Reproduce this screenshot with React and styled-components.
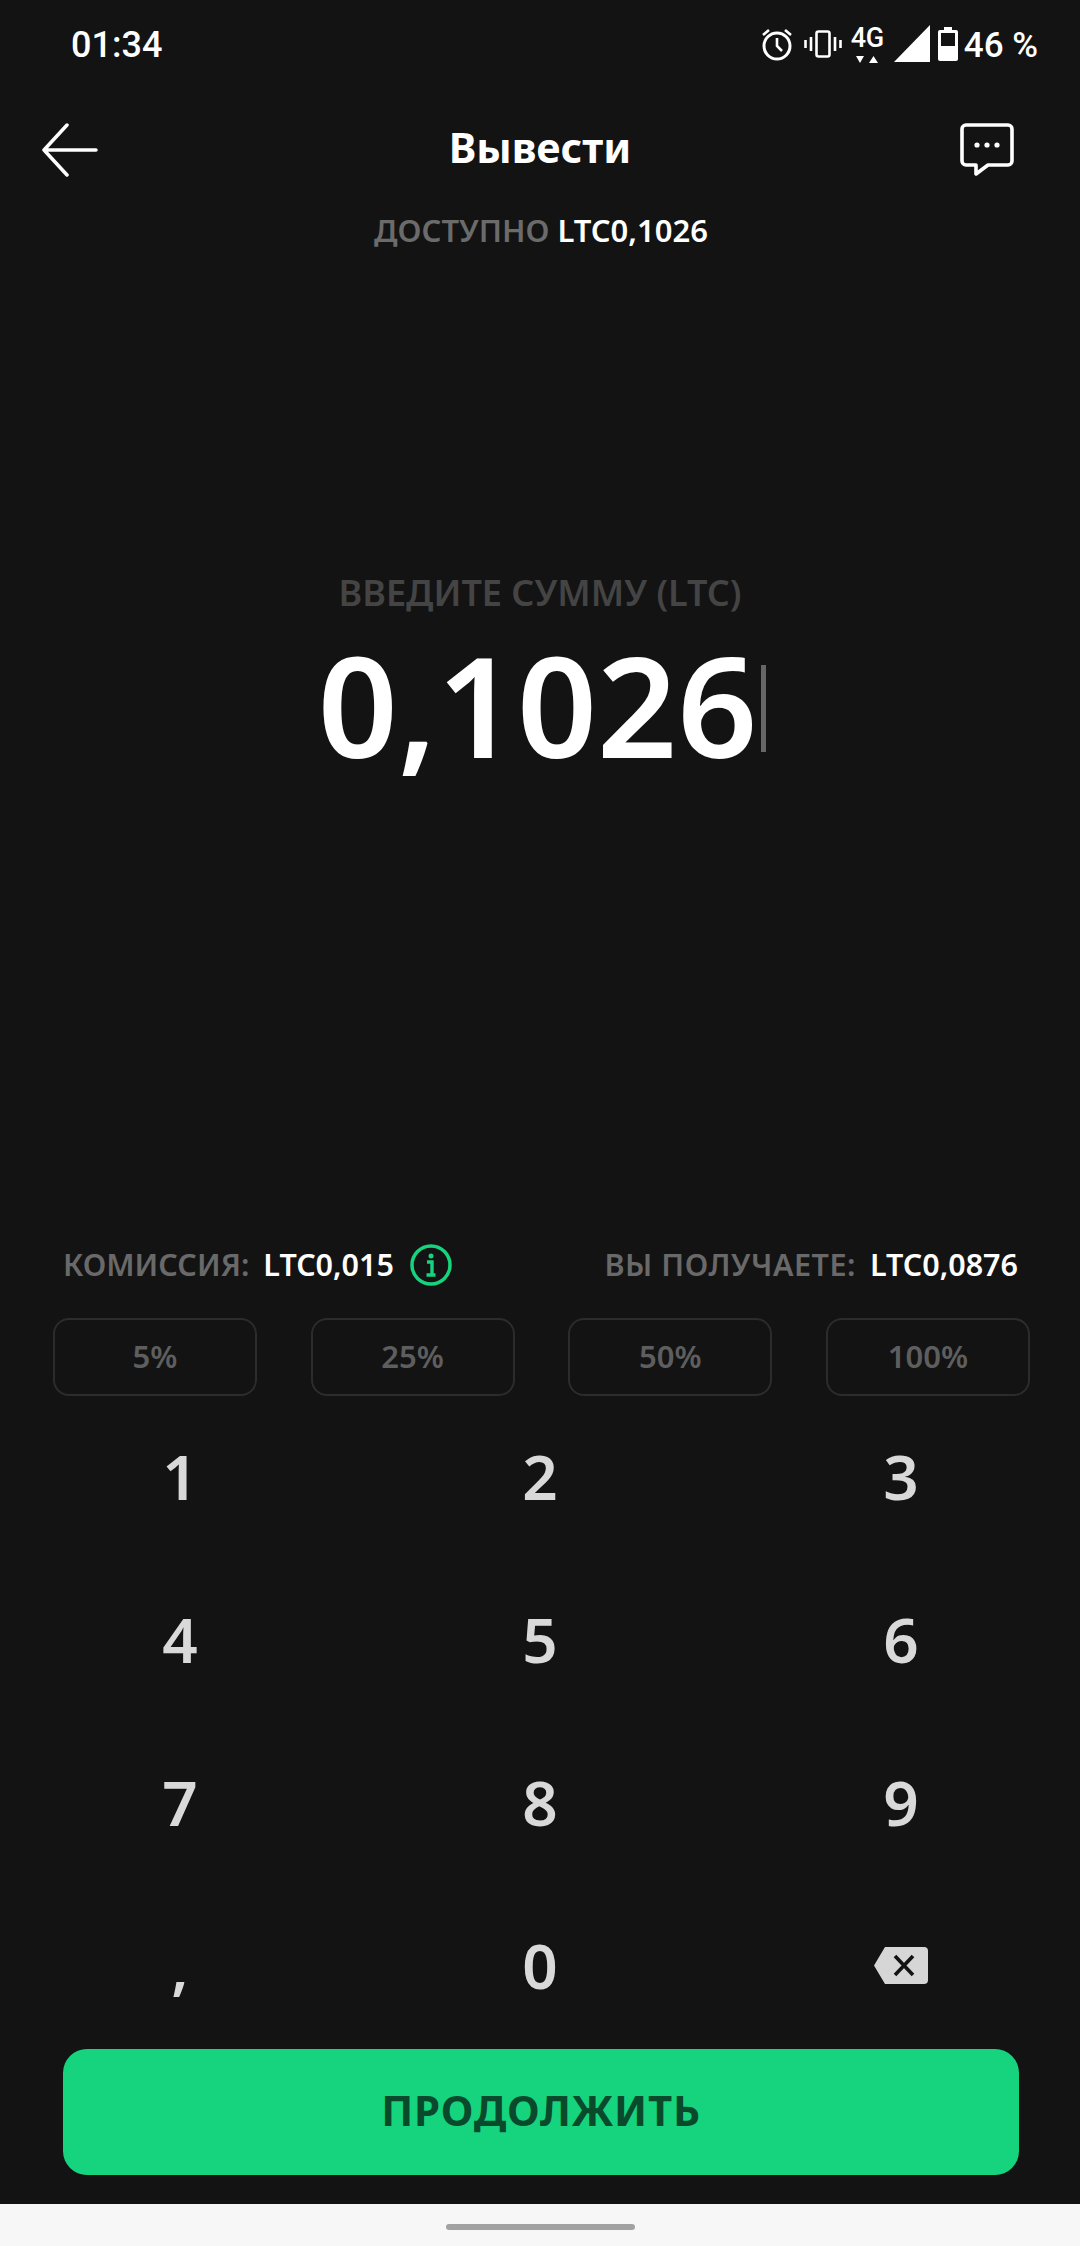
import React from 'react';
import styled, { createGlobalStyle } from 'styled-components';

const GlobalStyle = createGlobalStyle`
  html, body {
    margin: 0;
    padding: 0;
    background: #131313;
  }
  * {
    box-sizing: border-box;
  }
`;

const Page = styled.div`
  width: 1080px;
  height: 2246px;
  display: flex;
  flex-direction: column;
  background: #131313;
  font-family: "Noto Sans", "Open Sans", sans-serif;
  overflow: hidden;
`;

const StatusBar = styled.div`
  height: 90px;
  padding: 0 42px 0 71px;
  display: flex;
  align-items: center;
  justify-content: space-between;
  font-family: Roboto, sans-serif;
  color: #ffffff;
`;

const Time = styled.span`
  font-size: 36px;
  font-weight: 500;
`;

const StatusIcons = styled.div`
  display: flex;
  align-items: center;
`;

const StatusIcon = styled.svg`
  display: block;
  margin-left: ${(p) => p.$gap || 0}px;
  margin-bottom: 3px;
`;

const NetworkBox = styled.div`
  width: 33px;
  margin-left: 9px;
  display: flex;
  flex-direction: column;
  align-items: center;
`;

const NetworkLabel = styled.span`
  font-size: 27px;
  line-height: 24px;
  font-weight: 500;
  letter-spacing: -0.5px;
`;

const Percent = styled.span`
  margin-left: 6px;
  font-size: 35px;
  font-weight: 500;
  white-space: pre;
`;

const Header = styled.div`
  height: 120px;
  padding: 0 42px;
  display: grid;
  grid-template-columns: 1fr auto 1fr;
  align-items: center;
`;

const Title = styled.h1`
  margin: 0 0 6px;
  font-size: 41.5px;
  font-weight: 700;
  color: #ffffff;
`;

const HeaderEnd = styled.div`
  padding-right: 24px;
  display: flex;
  justify-content: flex-end;
`;

const Available = styled.div`
  height: 42px;
  padding-left: 2px;
  line-height: 40px;
  text-align: center;
  font-size: 31px;
  font-weight: 600;
  color: #6b6b6b;
`;

const White = styled.span`
  color: #ffffff;
`;

const AmountBlock = styled.div`
  flex: 1;
  padding-top: 320px;
  display: flex;
  flex-direction: column;
  align-items: center;
`;

const AmountLabel = styled.div`
  height: 42px;
  line-height: 42px;
  font-size: 36px;
  font-weight: 600;
  color: #444444;
`;

const AmountRow = styled.div`
  padding-left: 4px;
  display: flex;
  align-items: center;
`;

const Amount = styled.span`
  font-size: 140px;
  line-height: 180px;
  font-weight: 600;
  color: #ffffff;
`;

const Caret = styled.span`
  width: 5px;
  height: 87px;
  margin: 8px 0 0 4px;
  background: #666666;
`;

const FeeRow = styled.div`
  height: 50px;
  padding: 0 62px 0 63px;
  display: flex;
  align-items: center;
  justify-content: space-between;
`;

const FeeGroup = styled.div`
  display: flex;
  align-items: center;
`;

const FeeLabel = styled.span`
  padding-bottom: 2px;
  font-size: 30.5px;
  font-weight: 600;
  color: #696969;
  letter-spacing: ${(p) => p.$tracking || 0}px;
`;

const FeeValue = styled.span`
  margin-left: 14px;
  padding-bottom: 2px;
  font-size: 30.5px;
  font-weight: 600;
  color: #ffffff;
`;

const InfoIcon = styled.svg`
  display: block;
  margin-left: 16px;
`;

const Percents = styled.div`
  margin-top: 28px;
  padding: 0 50px 0 53px;
  display: flex;
  justify-content: space-between;
`;

const PercentButton = styled.button`
  width: 204px;
  height: 78px;
  padding: 0 0 2px;
  border: 2px solid #2c2c2c;
  border-radius: 16px;
  background: transparent;
  font-family: inherit;
  font-size: 31px;
  font-weight: 600;
  color: #5e5e5e;
`;

const Keypad = styled.div`
  display: grid;
  grid-template-columns: 360px 360px 362px;
  grid-auto-rows: 163px;
`;

const Key = styled.button`
  padding: 0 0 3px;
  border: 0;
  background: transparent;
  display: flex;
  align-items: center;
  justify-content: center;
  font-family: inherit;
  font-size: 62px;
  font-weight: 600;
  color: #d9d9d9;
`;

const ContinueButton = styled.button`
  width: 956px;
  height: 126px;
  margin: 1px 0 0 63px;
  padding: 0 0 6px;
  border: 0;
  border-radius: 24px;
  background: #16d47e;
  font-family: inherit;
  font-size: 42px;
  font-weight: 700;
  letter-spacing: 0.7px;
  color: #0a4a2c;
`;

const NavBar = styled.div`
  height: 42px;
  margin-top: 29px;
  background: #f7f7f7;
  display: flex;
  justify-content: center;
  padding-top: 20px;
`;

const HomeHandle = styled.div`
  width: 189px;
  height: 6px;
  border-radius: 3px;
  background: #a2a2a2;
`;

const AlarmIcon = () => (
  <StatusIcon width="32" height="34" viewBox="0 0 32 34" fill="none" stroke="#fff" strokeWidth="3">
    <circle cx="16" cy="19" r="13" />
    <path d="M16 11v8l5 5" strokeWidth="2.6" />
    <path d="M2 8l6-5M30 8l-6-5" strokeWidth="2.6" />
  </StatusIcon>
);

const VibrateIcon = () => (
  <StatusIcon $gap={11} width="38" height="28" viewBox="0 0 38 28" fill="none" stroke="#fff" strokeWidth="2.6">
    <rect x="12.5" y="1.5" width="13" height="25" rx="2" />
    <path d="M7 7v14M1.5 10v8M31 7v14M36.5 10v8" />
  </StatusIcon>
);

const NetworkArrows = () => (
  <svg width="24" height="8" viewBox="0 0 24 8" style={{ display: 'block', marginTop: '6px' }} fill="#fff">
    <path d="M1 0h8L5 7zM14 7h9l-4.500-7z" />
  </svg>
);

const SignalIcon = () => (
  <StatusIcon $gap={10} width="36" height="37" viewBox="0 0 36 37" fill="#fff">
    <path d="M36 0v37H0z" />
  </StatusIcon>
);

const BatteryIcon = () => (
  <StatusIcon $gap={8} width="20" height="34" viewBox="0 0 20 34" fill="#fff">
    <path fillRule="evenodd" d="M6 0h8v3h4a2 2 0 0 1 2 2v27a2 2 0 0 1-2 2H2a2 2 0 0 1-2-2V5a2 2 0 0 1 2-2h4zM3 6v13h14V6z" />
  </StatusIcon>
);

const BackIcon = () => (
  <svg width="56" height="54" viewBox="0 0 56 54" fill="none" stroke="#fff" strokeWidth="3.500" strokeLinecap="round" strokeLinejoin="round" style={{ display: 'block' }}>
    <path d="M25 2L2 27l23 25M2 27h52" />
  </svg>
);

const ChatIcon = () => (
  <svg width="54" height="54" viewBox="0 0 54 54" fill="none" style={{ display: 'block' }}>
    <path d="M6 2h42a4 4 0 0 1 4 4v32a4 4 0 0 1-4 4H28L16 51v-9H6a4 4 0 0 1-4-4V6a4 4 0 0 1 4-4z" stroke="#fff" strokeWidth="3.600" strokeLinejoin="round" />
    <circle cx="17" cy="22" r="2.600" fill="#fff" />
    <circle cx="27" cy="22" r="2.600" fill="#fff" />
    <circle cx="37" cy="22" r="2.600" fill="#fff" />
  </svg>
);

const Info = () => (
  <InfoIcon width="42" height="42" viewBox="0 0 42 42" fill="none">
    <circle cx="21" cy="21" r="19" stroke="#16d47e" strokeWidth="3.500" />
    <circle cx="21" cy="12" r="2.500" fill="#16d47e" />
    <path d="M17 18h5v12M16.500 31h9" stroke="#16d47e" strokeWidth="3.400" />
  </InfoIcon>
);

const BackspaceIcon = () => (
  <svg width="54" height="37" viewBox="0 0 54 37" style={{ display: 'block' }}>
    <path d="M11 0h39a4 4 0 0 1 4 4v29a4 4 0 0 1-4 4H11L0 18.500z" fill="#d6d6d6" />
    <path d="M21 9l18 19M39 9L21 28" stroke="#131313" strokeWidth="3.600" fill="none" />
  </svg>
);

const percents = ['5%', '25%', '50%', '100%'];
const keys = ['1', '2', '3', '4', '5', '6', '7', '8', '9', ',', '0'];

const App = () => {
  return (
    <Page>
      <GlobalStyle />
      <StatusBar>
        <Time>01:34</Time>
        <StatusIcons>
          <AlarmIcon />
          <VibrateIcon />
          <NetworkBox>
            <NetworkLabel>4G</NetworkLabel>
            <NetworkArrows />
          </NetworkBox>
          <SignalIcon />
          <BatteryIcon />
          <Percent>46 %</Percent>
        </StatusIcons>
      </StatusBar>

      <Header>
        <BackIcon />
        <Title>Вывести</Title>
        <HeaderEnd>
          <ChatIcon />
        </HeaderEnd>
      </Header>

      <Available>
        ДОСТУПНО <White>LTC0,1026</White>
      </Available>

      <AmountBlock>
        <AmountLabel>ВВЕДИТЕ СУММУ (LTC)</AmountLabel>
        <AmountRow>
          <Amount>0,1026</Amount>
          <Caret />
        </AmountRow>
      </AmountBlock>

      <FeeRow>
        <FeeGroup>
          <FeeLabel>КОМИССИЯ:</FeeLabel>
          <FeeValue>LTC0,015</FeeValue>
          <Info />
        </FeeGroup>
        <FeeGroup>
          <FeeLabel $tracking={0.55}>ВЫ ПОЛУЧАЕТЕ:</FeeLabel>
          <FeeValue>LTC0,0876</FeeValue>
        </FeeGroup>
      </FeeRow>

      <Percents>
        {percents.map((value) => (
          <PercentButton key={value}>{value}</PercentButton>
        ))}
      </Percents>

      <Keypad>
        {keys.map((value) => (
          <Key key={value}>{value}</Key>
        ))}
        <Key aria-label="Удалить">
          <BackspaceIcon />
        </Key>
      </Keypad>

      <ContinueButton>ПРОДОЛЖИТЬ</ContinueButton>

      <NavBar>
        <HomeHandle />
      </NavBar>
    </Page>
  );
};

export default App;
